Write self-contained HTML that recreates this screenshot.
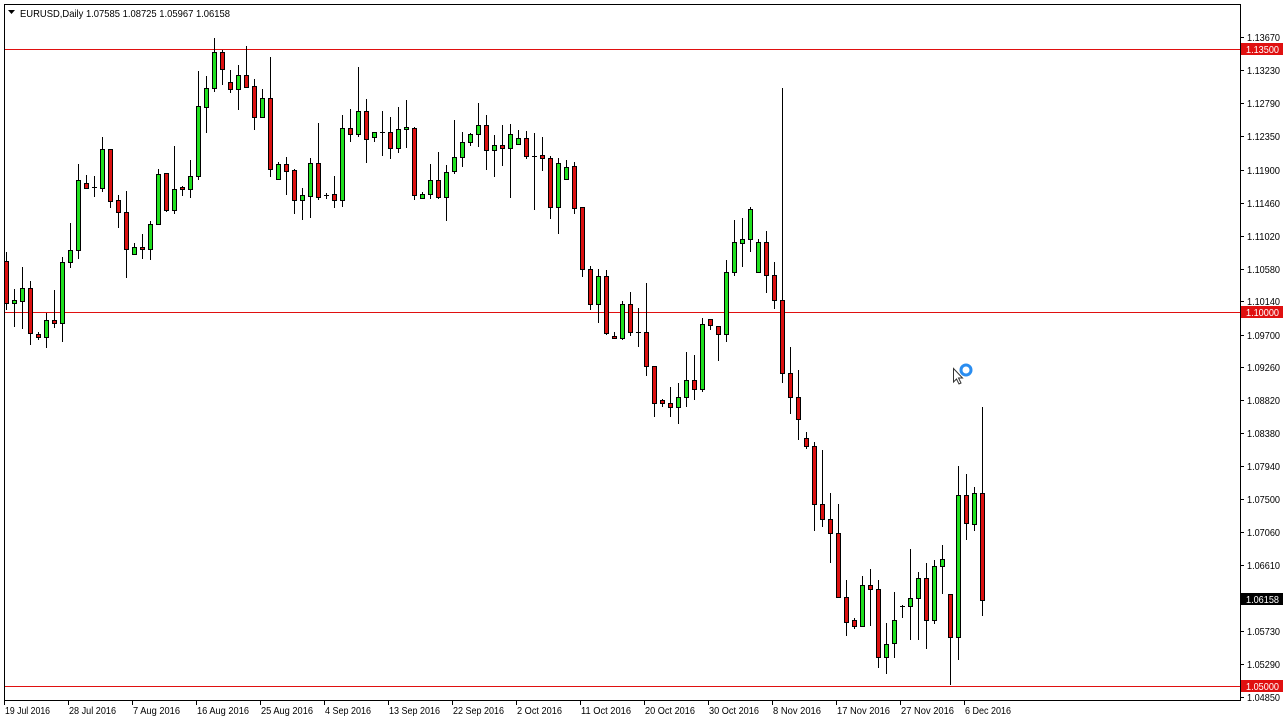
<!DOCTYPE html>
<html><head><meta charset="utf-8"><style>
html,body{margin:0;padding:0;background:#fff;width:1285px;height:723px;overflow:hidden}
svg{display:block}
text{font-family:"Liberation Sans",sans-serif;font-size:10.5px;fill:#000}
.g{fill:#1fe01f;stroke:#000;stroke-width:1}
.r{fill:#dc1010;stroke:#000;stroke-width:1}
</style></head><body>
<svg width="1285" height="723" viewBox="0 0 1285 723" xmlns="http://www.w3.org/2000/svg">
<rect x="0" y="0" width="1285" height="723" fill="#fff"/>
<rect x="4.5" y="4.5" width="1236" height="696" fill="none" stroke="#000"/>
<text x="20" y="17" textLength="210" lengthAdjust="spacingAndGlyphs">EURUSD,Daily  1.07585 1.08725 1.05967 1.06158</text>
<path d="M8 10h7l-3.5 4z" fill="#000"/>
<rect x="5" y="49" width="1235" height="1" fill="#e01010"/>
<rect x="5" y="312" width="1235" height="1" fill="#e01010"/>
<rect x="5" y="686" width="1235" height="1" fill="#e01010"/>
<path stroke="#000" stroke-width="1" fill="none" d="M6.5 252V310M14.5 289V327M22.5 267V329M30.5 281V345M38.5 332V340M46.5 313V348M54.5 290V328M62.5 257V342M70.5 223V268M78.5 164V259M86.5 175V189M94.5 176V197M92 187.5H97M102.5 137V192M110.5 149V208M118.5 195V228M126.5 191V278M134.5 243V254M142.5 234V259M150.5 221V260M158.5 169V224M166.5 173V212M174.5 146V214M182.5 186V196M190.5 160V198M198.5 71V180M206.5 76V133M214.5 38V92M222.5 50V85M230.5 70V93M238.5 65V110M246.5 46V88M254.5 79V130M262.5 89V118M270.5 57V177M278.5 162V180M286.5 157V195M294.5 169V214M302.5 188V220M310.5 158V218M318.5 123V200M326.5 193V199M324 195.5H329M334.5 176V208M342.5 115V207M350.5 109V142M358.5 67V137M366.5 99V163M374.5 132V142M382.5 111V156M380 132.5H385M390.5 117V159M398.5 107V153M406.5 100V148M414.5 127V200M422.5 192V198M430.5 164V199M438.5 152V199M446.5 165V221M454.5 120V174M462.5 132V167M470.5 133V146M478.5 103V147M486.5 115V170M494.5 135V177M502.5 125V166M510.5 124V198M518.5 130V145M526.5 131V159M534.5 133V210M532 156.5H537M542.5 137V171M550.5 156V219M558.5 158V234M566.5 160V180M574.5 162V214M582.5 207V277M590.5 266V310M598.5 269V323M606.5 270V335M614.5 332V338M622.5 301V340M630.5 292V336M638.5 308V347M636 332.5H641M646.5 283V376M654.5 366V417M662.5 399V407M670.5 387V417M678.5 383V424M686.5 352V407M694.5 355V400M702.5 318V392M710.5 319V330M718.5 326V361M726.5 260V342M734.5 220V276M742.5 218V267M750.5 207V252M758.5 239V272M766.5 231V293M774.5 262V309M782.5 88V383M790.5 347V414M798.5 370V440M806.5 432V449M814.5 442V531M822.5 450V527M830.5 493V563M838.5 504V597M846.5 580V636M854.5 618V629M862.5 576V626M870.5 569V626M878.5 580V668M886.5 623V674M894.5 592V658M902.5 605V618M900 606.5H905M910.5 549V640M918.5 572V640M926.5 563V649M934.5 560V624M942.5 545V594M950.5 594V685M958.5 466V660M966.5 474V540M974.5 487V531M982.5 407V616"/>
<g>
<rect class="r" x="4.5" y="261.5" width="4" height="42"/>
<rect class="g" x="12.5" y="300.5" width="4" height="3"/>
<rect class="g" x="20.5" y="288.5" width="4" height="13"/>
<rect class="r" x="28.5" y="288.5" width="4" height="45"/>
<rect class="r" x="36.5" y="334.5" width="4" height="3"/>
<rect class="g" x="44.5" y="320.5" width="4" height="17"/>
<rect class="r" x="52.5" y="320.5" width="4" height="3"/>
<rect class="g" x="60.5" y="262.5" width="4" height="61"/>
<rect class="g" x="68.5" y="250.5" width="4" height="12"/>
<rect class="g" x="76.5" y="180.5" width="4" height="70"/>
<rect class="r" x="84.5" y="183.5" width="4" height="5"/>
<rect class="g" x="100.5" y="149.5" width="4" height="39"/>
<rect class="r" x="108.5" y="149.5" width="4" height="52"/>
<rect class="r" x="116.5" y="200.5" width="4" height="12"/>
<rect class="r" x="124.5" y="212.5" width="4" height="37"/>
<rect class="g" x="132.5" y="247.5" width="4" height="7"/>
<rect class="r" x="140.5" y="247.5" width="4" height="2"/>
<rect class="g" x="148.5" y="224.5" width="4" height="25"/>
<rect class="g" x="156.5" y="174.5" width="4" height="50"/>
<rect class="r" x="164.5" y="173.5" width="4" height="37"/>
<rect class="g" x="172.5" y="189.5" width="4" height="21"/>
<rect class="r" x="180.5" y="187.5" width="4" height="2"/>
<rect class="g" x="188.5" y="176.5" width="4" height="13"/>
<rect class="g" x="196.5" y="106.5" width="4" height="70"/>
<rect class="g" x="204.5" y="88.5" width="4" height="19"/>
<rect class="g" x="212.5" y="52.5" width="4" height="36"/>
<rect class="r" x="220.5" y="52.5" width="4" height="17"/>
<rect class="r" x="228.5" y="82.5" width="4" height="7"/>
<rect class="g" x="236.5" y="75.5" width="4" height="14"/>
<rect class="r" x="244.5" y="75.5" width="4" height="12"/>
<rect class="r" x="252.5" y="86.5" width="4" height="31"/>
<rect class="g" x="260.5" y="98.5" width="4" height="19"/>
<rect class="r" x="268.5" y="98.5" width="4" height="71"/>
<rect class="g" x="276.5" y="164.5" width="4" height="15"/>
<rect class="r" x="284.5" y="164.5" width="4" height="7"/>
<rect class="r" x="292.5" y="170.5" width="4" height="30"/>
<rect class="g" x="300.5" y="195.5" width="4" height="5"/>
<rect class="g" x="308.5" y="163.5" width="4" height="33"/>
<rect class="r" x="316.5" y="163.5" width="4" height="34"/>
<rect class="r" x="332.5" y="194.5" width="4" height="6"/>
<rect class="g" x="340.5" y="128.5" width="4" height="72"/>
<rect class="r" x="348.5" y="128.5" width="4" height="6"/>
<rect class="g" x="356.5" y="111.5" width="4" height="23"/>
<rect class="r" x="364.5" y="111.5" width="4" height="28"/>
<rect class="g" x="372.5" y="132.5" width="4" height="5"/>
<rect class="r" x="388.5" y="132.5" width="4" height="16"/>
<rect class="g" x="396.5" y="129.5" width="4" height="19"/>
<rect class="g" x="404.5" y="127.5" width="4" height="2"/>
<rect class="r" x="412.5" y="128.5" width="4" height="67"/>
<rect class="g" x="420.5" y="194.5" width="4" height="4"/>
<rect class="g" x="428.5" y="180.5" width="4" height="14"/>
<rect class="r" x="436.5" y="180.5" width="4" height="17"/>
<rect class="g" x="444.5" y="172.5" width="4" height="25"/>
<rect class="g" x="452.5" y="157.5" width="4" height="14"/>
<rect class="g" x="460.5" y="142.5" width="4" height="15"/>
<rect class="g" x="468.5" y="134.5" width="4" height="8"/>
<rect class="g" x="476.5" y="125.5" width="4" height="9"/>
<rect class="r" x="484.5" y="125.5" width="4" height="25"/>
<rect class="g" x="492.5" y="145.5" width="4" height="5"/>
<rect class="r" x="500.5" y="145.5" width="4" height="3"/>
<rect class="g" x="508.5" y="134.5" width="4" height="14"/>
<rect class="g" x="516.5" y="138.5" width="4" height="6"/>
<rect class="r" x="524.5" y="138.5" width="4" height="18"/>
<rect class="r" x="540.5" y="155.5" width="4" height="3"/>
<rect class="r" x="548.5" y="158.5" width="4" height="49"/>
<rect class="g" x="556.5" y="163.5" width="4" height="44"/>
<rect class="g" x="564.5" y="167.5" width="4" height="12"/>
<rect class="r" x="572.5" y="166.5" width="4" height="42"/>
<rect class="r" x="580.5" y="207.5" width="4" height="62"/>
<rect class="r" x="588.5" y="269.5" width="4" height="35"/>
<rect class="g" x="596.5" y="276.5" width="4" height="28"/>
<rect class="r" x="604.5" y="276.5" width="4" height="57"/>
<rect class="r" x="612.5" y="336.5" width="4" height="2"/>
<rect class="g" x="620.5" y="304.5" width="4" height="34"/>
<rect class="r" x="628.5" y="304.5" width="4" height="28"/>
<rect class="r" x="644.5" y="332.5" width="4" height="34"/>
<rect class="r" x="652.5" y="366.5" width="4" height="37"/>
<rect class="r" x="660.5" y="400.5" width="4" height="3"/>
<rect class="r" x="668.5" y="403.5" width="4" height="4"/>
<rect class="g" x="676.5" y="397.5" width="4" height="10"/>
<rect class="g" x="684.5" y="380.5" width="4" height="17"/>
<rect class="r" x="692.5" y="380.5" width="4" height="9"/>
<rect class="g" x="700.5" y="324.5" width="4" height="65"/>
<rect class="r" x="708.5" y="319.5" width="4" height="6"/>
<rect class="r" x="716.5" y="326.5" width="4" height="8"/>
<rect class="g" x="724.5" y="272.5" width="4" height="62"/>
<rect class="g" x="732.5" y="242.5" width="4" height="30"/>
<rect class="g" x="740.5" y="239.5" width="4" height="4"/>
<rect class="g" x="748.5" y="209.5" width="4" height="30"/>
<rect class="g" x="756.5" y="242.5" width="4" height="30"/>
<rect class="r" x="764.5" y="242.5" width="4" height="33"/>
<rect class="r" x="772.5" y="275.5" width="4" height="25"/>
<rect class="r" x="780.5" y="300.5" width="4" height="73"/>
<rect class="r" x="788.5" y="373.5" width="4" height="24"/>
<rect class="r" x="796.5" y="397.5" width="4" height="22"/>
<rect class="r" x="804.5" y="438.5" width="4" height="8"/>
<rect class="r" x="812.5" y="446.5" width="4" height="58"/>
<rect class="r" x="820.5" y="504.5" width="4" height="15"/>
<rect class="r" x="828.5" y="519.5" width="4" height="14"/>
<rect class="r" x="836.5" y="533.5" width="4" height="64"/>
<rect class="r" x="844.5" y="597.5" width="4" height="25"/>
<rect class="r" x="852.5" y="620.5" width="4" height="6"/>
<rect class="g" x="860.5" y="585.5" width="4" height="41"/>
<rect class="r" x="868.5" y="585.5" width="4" height="4"/>
<rect class="r" x="876.5" y="589.5" width="4" height="68"/>
<rect class="g" x="884.5" y="644.5" width="4" height="13"/>
<rect class="g" x="892.5" y="620.5" width="4" height="23"/>
<rect class="g" x="908.5" y="598.5" width="4" height="8"/>
<rect class="g" x="916.5" y="578.5" width="4" height="20"/>
<rect class="r" x="924.5" y="578.5" width="4" height="42"/>
<rect class="g" x="932.5" y="566.5" width="4" height="54"/>
<rect class="g" x="940.5" y="559.5" width="4" height="7"/>
<rect class="r" x="948.5" y="594.5" width="4" height="43"/>
<rect class="g" x="956.5" y="495.5" width="4" height="142"/>
<rect class="r" x="964.5" y="495.5" width="4" height="28"/>
<rect class="g" x="972.5" y="493.5" width="4" height="31"/>
<rect class="r" x="980.5" y="493.5" width="4" height="107"/>
</g>
<path d="M953.5 368.5V382l3-3 2.5 5 2-1-2.5-5h4z" fill="#fff" stroke="#333"/>
<circle cx="966" cy="370" r="5" fill="none" stroke="#2a8df0" stroke-width="3"/>
<path stroke="#000" d="M1241 37.5h3M1241 70.5h3M1241 103.5h3M1241 136.5h3M1241 170.5h3M1241 203.5h3M1241 236.5h3M1241 269.5h3M1241 301.5h3M1241 335.5h3M1241 367.5h3M1241 400.5h3M1241 433.5h3M1241 466.5h3M1241 499.5h3M1241 532.5h3M1241 565.5h3M1241 631.5h3M1241 664.5h3M1241 697.5h3"/>
<g>
<text x="1247" y="41" textLength="33" lengthAdjust="spacingAndGlyphs">1.13670</text>
<text x="1247" y="74" textLength="33" lengthAdjust="spacingAndGlyphs">1.13230</text>
<text x="1247" y="107" textLength="33" lengthAdjust="spacingAndGlyphs">1.12790</text>
<text x="1247" y="140" textLength="33" lengthAdjust="spacingAndGlyphs">1.12350</text>
<text x="1247" y="174" textLength="33" lengthAdjust="spacingAndGlyphs">1.11900</text>
<text x="1247" y="207" textLength="33" lengthAdjust="spacingAndGlyphs">1.11460</text>
<text x="1247" y="240" textLength="33" lengthAdjust="spacingAndGlyphs">1.11020</text>
<text x="1247" y="273" textLength="33" lengthAdjust="spacingAndGlyphs">1.10580</text>
<text x="1247" y="305" textLength="33" lengthAdjust="spacingAndGlyphs">1.10140</text>
<text x="1247" y="339" textLength="33" lengthAdjust="spacingAndGlyphs">1.09700</text>
<text x="1247" y="371" textLength="33" lengthAdjust="spacingAndGlyphs">1.09260</text>
<text x="1247" y="404" textLength="33" lengthAdjust="spacingAndGlyphs">1.08820</text>
<text x="1247" y="437" textLength="33" lengthAdjust="spacingAndGlyphs">1.08380</text>
<text x="1247" y="470" textLength="33" lengthAdjust="spacingAndGlyphs">1.07940</text>
<text x="1247" y="503" textLength="33" lengthAdjust="spacingAndGlyphs">1.07500</text>
<text x="1247" y="536" textLength="33" lengthAdjust="spacingAndGlyphs">1.07060</text>
<text x="1247" y="569" textLength="33" lengthAdjust="spacingAndGlyphs">1.06610</text>
<text x="1247" y="635" textLength="33" lengthAdjust="spacingAndGlyphs">1.05730</text>
<text x="1247" y="668" textLength="33" lengthAdjust="spacingAndGlyphs">1.05290</text>
<text x="1247" y="701" textLength="33" lengthAdjust="spacingAndGlyphs">1.04850</text>
</g>
<rect x="1241" y="43" width="42" height="12" fill="#e01010"/>
<text x="1246" y="53" style="fill:#fff" textLength="33" lengthAdjust="spacingAndGlyphs">1.13500</text>
<rect x="1241" y="306" width="42" height="12" fill="#e01010"/>
<text x="1246" y="316" style="fill:#fff" textLength="33" lengthAdjust="spacingAndGlyphs">1.10000</text>
<rect x="1241" y="593" width="42" height="12" fill="#000"/>
<text x="1246" y="603" style="fill:#fff" textLength="33" lengthAdjust="spacingAndGlyphs">1.06158</text>
<rect x="1241" y="680" width="42" height="12" fill="#e01010"/>
<text x="1246" y="690" style="fill:#fff" textLength="33" lengthAdjust="spacingAndGlyphs">1.05000</text>
<path stroke="#000" d="M4.5 701v4M68.5 701v4M132.5 701v4M196.5 701v4M260.5 701v4M324.5 701v4M388.5 701v4M452.5 701v4M516.5 701v4M580.5 701v4M644.5 701v4M708.5 701v4M772.5 701v4M836.5 701v4M900.5 701v4M964.5 701v4"/>
<g>
<text x="5" y="714" textLength="45" lengthAdjust="spacingAndGlyphs">19 Jul 2016</text>
<text x="69" y="714" textLength="47" lengthAdjust="spacingAndGlyphs">28 Jul 2016</text>
<text x="133" y="714" textLength="47" lengthAdjust="spacingAndGlyphs">7 Aug 2016</text>
<text x="197" y="714" textLength="52" lengthAdjust="spacingAndGlyphs">16 Aug 2016</text>
<text x="261" y="714" textLength="52" lengthAdjust="spacingAndGlyphs">25 Aug 2016</text>
<text x="325" y="714" textLength="46" lengthAdjust="spacingAndGlyphs">4 Sep 2016</text>
<text x="389" y="714" textLength="51" lengthAdjust="spacingAndGlyphs">13 Sep 2016</text>
<text x="453" y="714" textLength="51" lengthAdjust="spacingAndGlyphs">22 Sep 2016</text>
<text x="517" y="714" textLength="45" lengthAdjust="spacingAndGlyphs">2 Oct 2016</text>
<text x="581" y="714" textLength="50" lengthAdjust="spacingAndGlyphs">11 Oct 2016</text>
<text x="645" y="714" textLength="50" lengthAdjust="spacingAndGlyphs">20 Oct 2016</text>
<text x="709" y="714" textLength="50" lengthAdjust="spacingAndGlyphs">30 Oct 2016</text>
<text x="773" y="714" textLength="48" lengthAdjust="spacingAndGlyphs">8 Nov 2016</text>
<text x="837" y="714" textLength="53" lengthAdjust="spacingAndGlyphs">17 Nov 2016</text>
<text x="901" y="714" textLength="53" lengthAdjust="spacingAndGlyphs">27 Nov 2016</text>
<text x="965" y="714" textLength="46" lengthAdjust="spacingAndGlyphs">6 Dec 2016</text>
</g>
</svg>
</body></html>
